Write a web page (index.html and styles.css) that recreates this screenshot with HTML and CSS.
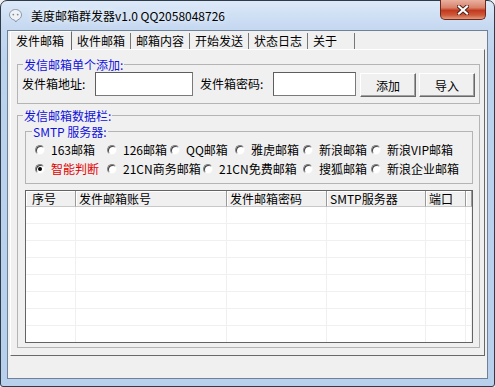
FILE: index.html
```html
<!DOCTYPE html>
<html>
<head>
	<meta charset="UTF-8">
	<title>美度邮箱群发器</title>
	<link rel="stylesheet" href="styles.css">
</head>
<body>
	<div class="window">
		<div class="titlebar">
			<svg class="app-icon" width="15" height="15" viewBox="0 0 15 15">
				<path d="M7.5 1.5c3.3 0 6 2.4 6 5.4 0 2.4-1.7 4.4-4.1 5.1l-1.6 2-1.2-1.9C3.8 11.6 1.5 9.5 1.5 6.9c0-3 2.7-5.4 6-5.4z" fill="#eef2f7" stroke="#8a96a6"/>
				<circle cx="5.3" cy="6.6" r="0.9" fill="#7d8898"/>
				<circle cx="9.7" cy="6.6" r="0.9" fill="#7d8898"/>
			</svg>
			<span class="title">美度邮箱群发器v1.0 QQ2058048726</span>
			<div class="close">
				<svg width="12" height="10" viewBox="0 0 12 10">
					<path d="M2 1.5l8 7M10 1.5l-8 7" stroke="#4b2018" stroke-width="4" stroke-linecap="square"/>
					<path d="M2 1.5l8 7M10 1.5l-8 7" stroke="#fff" stroke-width="2.2" stroke-linecap="square"/>
				</svg>
			</div>
		</div>

		<div class="client">
			<div class="tabs">
				<div class="tab active">发件邮箱</div>
				<div class="tab">收件邮箱</div>
				<div class="tab">邮箱内容</div>
				<div class="tab">开始发送</div>
				<div class="tab">状态日志</div>
				<div class="tab last">关于</div>
			</div>

			<div class="panel">
				<fieldset class="group single">
					<legend>发信邮箱单个添加:</legend>
					<div class="add-row">
						<label class="field-label">发件箱地址:</label>
						<input class="text-box addr" type="text">
						<label class="field-label pass-label">发件箱密码:</label>
						<input class="text-box pass" type="text">
						<button class="btn add">添加</button>
						<button class="btn import">导入</button>
					</div>
				</fieldset>

				<fieldset class="group data">
					<legend>发信邮箱数据栏:</legend>
					<fieldset class="group smtp">
						<legend>SMTP 服务器:</legend>
						<div class="radio-row first">
							<span class="radio"><i></i>163邮箱</span>
							<span class="radio"><i></i>126邮箱</span>
							<span class="radio"><i></i>QQ邮箱</span>
							<span class="radio"><i></i>雅虎邮箱</span>
							<span class="radio"><i></i>新浪邮箱</span>
							<span class="radio"><i></i>新浪VIP邮箱</span>
						</div>
						<div class="radio-row second">
							<span class="radio checked"><i></i>智能判断</span>
							<span class="radio"><i></i>21CN商务邮箱</span>
							<span class="radio"><i></i>21CN免费邮箱</span>
							<span class="radio"><i></i>搜狐邮箱</span>
							<span class="radio"><i></i>新浪企业邮箱</span>
						</div>
					</fieldset>

					<div class="list">
						<div class="list-row list-head">
							<span class="num">序号</span>
							<span>发件邮箱账号</span>
							<span>发件邮箱密码</span>
							<span>SMTP服务器</span>
							<span>端口</span>
							<span></span>
						</div>
						<div class="list-row"><span></span><span></span><span></span><span></span><span></span><span></span></div>
						<div class="list-row"><span></span><span></span><span></span><span></span><span></span><span></span></div>
						<div class="list-row"><span></span><span></span><span></span><span></span><span></span><span></span></div>
						<div class="list-row"><span></span><span></span><span></span><span></span><span></span><span></span></div>
						<div class="list-row"><span></span><span></span><span></span><span></span><span></span><span></span></div>
						<div class="list-row"><span></span><span></span><span></span><span></span><span></span><span></span></div>
						<div class="list-row"><span></span><span></span><span></span><span></span><span></span><span></span></div>
						<div class="list-row"><span></span><span></span><span></span><span></span><span></span><span></span></div>
					</div>
				</fieldset>
			</div>

			<div class="statusbar"></div>
		</div>
	</div>
</body>
</html>
```

FILE: styles.css
```css
body {
	margin: 0;
	padding: 0;
	font-family: "Noto Sans CJK SC", "Noto Sans", sans-serif;
	font-size: 12px;
	color: #000;
	background-color: #f0f0f0;
}

/* window frame */
.window {
	width: 495px;
	height: 387px;
	box-sizing: border-box;
	border: 1px solid #2f3b49;
	border-radius: 7px 7px 3px 3px;
	padding: 0 6px 7px 6px;
	background: linear-gradient(to bottom, #dce9f8 0, #c6d9f1 26px, #bcd3ee 60px, #b8d0ec 100%);
	display: flex;
	flex-direction: column;
}

.titlebar {
	height: 29px;
	flex-shrink: 0;
	display: flex;
	align-items: center;
}

.app-icon {
	margin-left: 1px;
}

.title {
	margin-left: 8px;
	line-height: 16px;
	text-shadow: 0 0 6px #fff;
}

.close {
	margin-left: auto;
	margin-right: 2px;
	margin-top: -1px;
	align-self: flex-start;
	width: 46px;
	height: 20px;
	box-sizing: border-box;
	border: 1px solid #6b2a1c;
	border-top: none;
	border-radius: 0 0 5px 5px;
	background: linear-gradient(to bottom, #eab0a0 0, #d8826a 40%, #c2391d 55%, #cf5a3c 80%, #e39a7e 100%);
	display: flex;
	align-items: center;
	justify-content: center;
}

.client {
	flex: 1;
	display: flex;
	flex-direction: column;
	background-color: #f0f0f0;
	border: 1px solid #6e8196;
}

/* tabs */
.tabs {
	height: 18px;
	flex-shrink: 0;
	display: flex;
	align-items: flex-start;
	padding-left: 2px;
}

.tab {
	margin-top: 2px;
	height: 16px;
	line-height: 16px;
	padding: 0 5px;
	border-right: 1px solid #777;
}

.tab.active {
	position: relative;
	z-index: 1;
	margin-top: 0;
	height: 19px;
	line-height: 18px;
	padding: 0 7px 0 5px;
	border-left: 1px solid #fff;
	border-top: 1px solid #fff;
	border-right: 1px solid #696969;
	box-sizing: border-box;
	background-color: #f0f0f0;
}

.tab.last {
	padding-right: 17px;
}

.panel {
	flex: 1;
	margin: 0 2px;
	border: 1px solid;
	border-color: #fff #696969 #696969 #fff;
}

.statusbar {
	height: 22px;
	flex-shrink: 0;
}

/* group boxes */
.group {
	margin: 0;
	padding: 0;
	min-width: 0;
	border: 1px solid #b4b4b4;
}

.group legend {
	margin-left: 5px;
	padding: 0 1px;
	line-height: 13px;
	color: #1010dd;
}

.single {
	margin: 8px 4px 0 6px;
	padding: 1px 0 7px 0;
}

.add-row {
	display: flex;
	align-items: center;
	height: 24px;
	padding-left: 4px;
}

.field-label {
	width: 73px;
	line-height: 24px;
}

.pass-label {
	margin-left: 7px;
}

.text-box {
	height: 24px;
	box-sizing: border-box;
	border: 1px solid #7a7a7a;
	border-top-color: #5e5e5e;
	border-left-color: #5e5e5e;
	background-color: #fff;
	padding: 0 2px;
	outline: none;
}

.addr {
	width: 98px;
}

.pass {
	width: 83px;
}

.btn {
	width: 56px;
	height: 24px;
	margin-top: 2px;
	margin-left: 4px;
	box-sizing: border-box;
	font-family: inherit;
	font-size: 12px;
	color: #000;
	background-color: #f0f0f0;
	border: 1px solid;
	border-color: #fff #696969 #696969 #fff;
	box-shadow: inset -1px -1px 0 #a0a0a0;
	padding: 0;
}

.import {
	margin-left: 3px;
}

.data {
	margin: 5px 4px 0 6px;
	padding: 0 0 4px 0;
}

.smtp {
	margin: 3px 6px 0 7px;
	padding: 2px 0 5px 0;
}

.smtp legend {
	margin-left: 6px;
}

.radio-row {
	display: grid;
	height: 19px;
	align-items: center;
	padding-left: 9px;
}

.radio-row.first {
	grid-template-columns: 72px 63px 65px 68px 68px auto;
}

.radio-row.second {
	grid-template-columns: 72px 96px 100px 68px auto;
}

.radio {
	display: flex;
	align-items: center;
	white-space: nowrap;
	line-height: 19px;
}

.radio i {
	width: 10px;
	height: 10px;
	box-sizing: border-box;
	margin-right: 6px;
	border-radius: 50%;
	background-color: #fff;
	border: 1px solid;
	border-color: #808080 #f4f4f4 #f4f4f4 #808080;
	box-shadow: inset 1px 1px 0 #404040;
	display: flex;
	align-items: center;
	justify-content: center;
}

.radio.checked {
	color: #e00000;
}

.radio.checked i::after {
	content: "";
	width: 4px;
	height: 4px;
	border-radius: 50%;
	background-color: #000;
}

/* list view */
.list {
	margin: 6px 6px 0 7px;
	height: 153px;
	box-sizing: border-box;
	border: 1px solid #646464;
	background-color: #fff;
	overflow: hidden;
}

.list-row {
	display: grid;
	grid-template-columns: 50px 151px 100px 99px 40px 1fr;
	height: 17px;
}

.list-row span {
	border-right: 1px solid #f0f0f0;
	border-bottom: 1px solid #f0f0f0;
}

.list-head {
	height: 16px;
	background-color: #f0f0f0;
}

.list-head span {
	line-height: 15px;
	padding-left: 3px;
	border-right: 1px solid #9a9a9a;
	border-bottom: 1px solid #c8c8c8;
	box-shadow: inset 1px 1px 0 #fff;
	white-space: nowrap;
	overflow: hidden;
}

.list-head .num {
	padding-left: 6px;
}
```
